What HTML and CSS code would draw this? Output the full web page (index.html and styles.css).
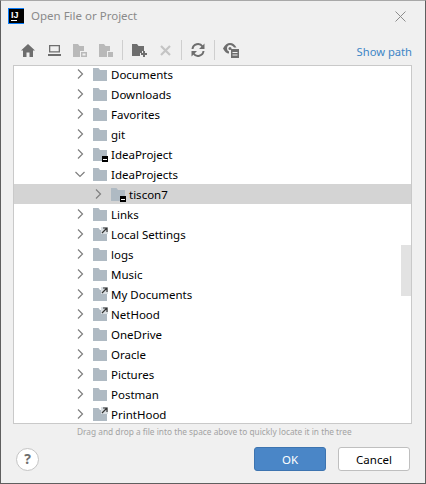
FILE: index.html
```html
<!DOCTYPE html>
<html lang="en">
<head>
<meta charset="UTF-8">
<meta name="viewport" content="width=device-width, initial-scale=1.0">
<title>Open File or Project</title>
<link rel="stylesheet" href="styles.css">
</head>
<body>

<!-- shared icons -->
<svg class="defs" width="0" height="0">
    <symbol id="folder" viewBox="0 0 14 13">
        <path d="M0 0H5.500L7 2H14V13H0Z"/>
    </symbol>
    <symbol id="chev" viewBox="0 0 8 12">
        <path d="M2 1.500L6.500 6L2 10.500" fill="none" stroke="currentColor" stroke-width="1.200"/>
    </symbol>
    <symbol id="link" viewBox="0 0 7 7">
        <path d="M1 6L5.500 1.500M2 1H6V5" stroke="#333" stroke-width="1.200" fill="none"/>
    </symbol>
</svg>

<div class="dialog">
    <div class="titlebar">
        <svg class="app-icon" width="16" height="16" viewBox="0 0 16 16">
            <rect width="16" height="16" fill="#087cfa"/>
            <rect x="1" y="1" width="15" height="14" fill="#000"/>
            <text x="3" y="10" class="app-icon-text">IJ</text>
            <rect x="3" y="12" width="6" height="1" fill="#fff"/>
        </svg>
        <span class="title">Open File or Project</span>
        <svg class="close" width="11" height="11" viewBox="0 0 11 11">
            <path d="M0.500 0.500L10.500 10.500M10.500 0.500L0.500 10.500" stroke="#8c8c8c" stroke-width="1" fill="none"/>
        </svg>
    </div>

    <div class="toolbar">
        <span class="tool">
            <svg width="14" height="13" viewBox="0 0 14 13"><path d="M7 0L14 6.500H12V13H8.500V8.500H5.500V13H2V6.500H0Z" fill="#6e6e6e"/></svg>
        </span>
        <span class="tool">
            <svg width="13" height="11" viewBox="0 0 13 11"><path d="M1 0H12V7.500H1ZM2.300 1.300V6.200H10.700V1.300Z" fill="#6e6e6e" fill-rule="evenodd"/><rect y="9" width="13" height="2" fill="#6e6e6e"/></svg>
        </span>
        <span class="tool">
            <svg width="14" height="13" viewBox="0 0 14 13"><path d="M0 0H5L6.500 2H11V7H7V13H0Z" fill="#b9b9b9"/><path d="M8 8H14V13H8ZM9.500 9.500V11.500H12.500V9.500Z" fill="#b9b9b9" fill-rule="evenodd"/></svg>
        </span>
        <span class="tool">
            <svg width="14" height="13" viewBox="0 0 14 13"><path d="M0 0H5L6.500 2H11V7H8V13H0Z" fill="#b9b9b9"/><rect x="9" y="8" width="5" height="5" fill="#b9b9b9"/></svg>
        </span>
        <span class="sep"></span>
        <span class="tool">
            <svg width="15" height="13" viewBox="0 0 15 13"><path d="M0 0H5L6.500 2H12V7H10V9H8V12H0Z" fill="#6e6e6e"/><path d="M11 8H13V10H15V12H13V14H11V12H9V10H11Z" fill="#6e6e6e" transform="translate(0 -1)"/></svg>
        </span>
        <span class="tool">
            <svg width="11" height="11" viewBox="0 0 11 11"><path d="M1 1L10 10M10 1L1 10" stroke="#c4c4c4" stroke-width="2.200" fill="none"/></svg>
        </span>
        <span class="sep"></span>
        <span class="tool">
            <svg width="14" height="14" viewBox="0 0 14 14"><path d="M1.500 6A5.500 5.500 0 0 1 11.500 3.500M12.500 8A5.500 5.500 0 0 1 2.500 10.500" stroke="#6e6e6e" stroke-width="2" fill="none"/><path d="M13.500 0.500V6H8ZM0.500 13.500V8H6Z" fill="#6e6e6e"/></svg>
        </span>
        <span class="sep"></span>
        <span class="tool">
            <svg width="16" height="15" viewBox="0 0 16 15"><path d="M0 5.500C2 1.500 4.500 0 7 0C10 0 12 2 13.500 4.500H11C10 3 8.500 2 7 2C5 2 4 3.500 4 5.500C4 7 5 8 6 8.500V10.500C3.500 10.500 1.500 8.500 0 5.500Z" fill="#6e6e6e"/><circle cx="7" cy="5.500" r="1.500" fill="#6e6e6e"/><path d="M8 6H16V15H8ZM9.500 9V10H14.500V9ZM9.500 11.500V12.500H14.500V11.500Z" fill="#6e6e6e" fill-rule="evenodd"/></svg>
        </span>
        <a class="show-path">Show path</a>
    </div>

    <div class="tree">
        <div class="rows">
            <div class="row"><svg class="chev"><use href="#chev"/></svg><svg class="folder"><use href="#folder"/></svg>Documents</div>
            <div class="row"><svg class="chev"><use href="#chev"/></svg><svg class="folder"><use href="#folder"/></svg>Downloads</div>
            <div class="row"><svg class="chev"><use href="#chev"/></svg><svg class="folder"><use href="#folder"/></svg>Favorites</div>
            <div class="row"><svg class="chev"><use href="#chev"/></svg><svg class="folder"><use href="#folder"/></svg>git</div>
            <div class="row"><svg class="chev"><use href="#chev"/></svg><span class="icon"><svg class="folder"><use href="#folder"/></svg><i class="badge-drive"></i></span>IdeaProject</div>
            <div class="row"><svg class="chev open"><use href="#chev"/></svg><svg class="folder"><use href="#folder"/></svg>IdeaProjects</div>
            <div class="row sub selected"><svg class="chev"><use href="#chev"/></svg><span class="icon"><svg class="folder"><use href="#folder"/></svg><i class="badge-drive"></i></span>tiscon7</div>
            <div class="row"><svg class="chev"><use href="#chev"/></svg><svg class="folder"><use href="#folder"/></svg>Links</div>
            <div class="row"><svg class="chev"><use href="#chev"/></svg><span class="icon"><svg class="folder"><use href="#folder"/></svg><i class="badge-link"><svg width="7" height="7"><use href="#link"/></svg></i></span>Local Settings</div>
            <div class="row"><svg class="chev"><use href="#chev"/></svg><svg class="folder"><use href="#folder"/></svg>logs</div>
            <div class="row"><svg class="chev"><use href="#chev"/></svg><svg class="folder"><use href="#folder"/></svg>Music</div>
            <div class="row"><svg class="chev"><use href="#chev"/></svg><span class="icon"><svg class="folder"><use href="#folder"/></svg><i class="badge-link"><svg width="7" height="7"><use href="#link"/></svg></i></span>My Documents</div>
            <div class="row"><svg class="chev"><use href="#chev"/></svg><span class="icon"><svg class="folder"><use href="#folder"/></svg><i class="badge-link"><svg width="7" height="7"><use href="#link"/></svg></i></span>NetHood</div>
            <div class="row"><svg class="chev"><use href="#chev"/></svg><svg class="folder"><use href="#folder"/></svg>OneDrive</div>
            <div class="row"><svg class="chev"><use href="#chev"/></svg><svg class="folder"><use href="#folder"/></svg>Oracle</div>
            <div class="row"><svg class="chev"><use href="#chev"/></svg><svg class="folder"><use href="#folder"/></svg>Pictures</div>
            <div class="row"><svg class="chev"><use href="#chev"/></svg><svg class="folder"><use href="#folder"/></svg>Postman</div>
            <div class="row"><svg class="chev"><use href="#chev"/></svg><span class="icon"><svg class="folder"><use href="#folder"/></svg><i class="badge-link"><svg width="7" height="7"><use href="#link"/></svg></i></span>PrintHood</div>
        </div>
        <div class="thumb"></div>
    </div>

    <div class="hint">Drag and drop a file into the space above to quickly locate it in the tree</div>

    <div class="footer">
        <span class="help">?</span>
        <button class="btn primary">OK</button>
        <button class="btn">Cancel</button>
    </div>
</div>

</body>
</html>
```

FILE: styles.css
```css
/* dialog frame */
html, body {
    margin: 0;
    height: 100%;
}
body {
    font-family: "Noto Sans", "Open Sans", Arial, sans-serif;
    font-size: 11.500px;
    color: #000;
    overflow: hidden;
}
.defs {
    position: absolute;
}
.dialog {
    box-sizing: border-box;
    width: 426px;
    height: 484px;
    background-color: #f0f0f0;
    border: 1px solid #5f5f5f;
    border-top-color: #a8a8a8;
    display: flex;
    flex-direction: column;
}

/* title */
.titlebar {
    height: 30px;
    display: flex;
    align-items: center;
    padding: 0 19px 0 7px;
}
.app-icon {
    margin-right: 7px;
}
.app-icon-text {
    font-family: "Liberation Sans", Arial, sans-serif;
    font-size: 9px;
    font-weight: bold;
    fill: #fff;
}
.title {
    flex: 1;
    margin-bottom: 2px;
    color: #8a8a8a;
}

/* toolbar */
.toolbar {
    height: 34px;
    display: flex;
    align-items: center;
    padding: 4px 13px 0 14px;
    box-sizing: border-box;
}
.tool {
    width: 26px;
    display: flex;
    justify-content: center;
}
.sep {
    width: 1px;
    height: 20px;
    margin: 0 3px;
    background-color: #cfcfcf;
}
.show-path {
    margin-left: auto;
    margin-top: 2px;
    color: #3d85c6;
    font-size: 11.200px;
}

/* tree */
.tree {
    position: relative;
    box-sizing: border-box;
    height: 359px;
    margin: 0 13px 0 12px;
    background-color: #fff;
    border: 1px solid #c9c9c9;
    overflow: hidden;
}
.rows {
    margin-top: -2px;
}
.row {
    box-sizing: border-box;
    height: 20px;
    line-height: 18px;
    padding-top: 2px;
    display: flex;
    align-items: center;
    padding-left: 62px;
    white-space: nowrap;
}
.row.sub {
    padding-left: 80px;
}
.row.selected {
    background-color: #d4d4d4;
}
.chev {
    width: 8px;
    height: 12px;
    margin-right: 9px;
    margin-bottom: 2px;
    color: #7f7f7f;
}
.chev.open {
    transform: rotate(90deg);
}
.folder {
    width: 14px;
    height: 13px;
    margin-right: 4px;
    margin-bottom: 1px;
    fill: #afbac3;
}
.icon {
    position: relative;
    display: flex;
}
.badge-drive {
    position: absolute;
    left: 9px;
    top: 8px;
    width: 6px;
    height: 6px;
    background-color: #000;
}
.badge-drive::after {
    content: "";
    position: absolute;
    left: 1px;
    top: 3px;
    width: 4px;
    height: 1px;
    background-color: #fff;
}
.badge-link {
    position: absolute;
    left: 8px;
    top: -1px;
    width: 7px;
    height: 7px;
    display: flex;
    background-color: #d9dee2;
}
.thumb {
    position: absolute;
    right: 0;
    top: 179px;
    width: 10px;
    height: 51px;
    background-color: #e2e2e2;
}

/* bottom */
.hint {
    height: 16px;
    line-height: 15px;
    padding-left: 76px;
    color: #a3a3a3;
    font-size: 8.300px;
    white-space: nowrap;
}
.footer {
    display: flex;
    align-items: center;
    padding: 7px 15px 0 15px;
    gap: 12px;
}
.help {
    box-sizing: border-box;
    width: 23px;
    height: 23px;
    margin-right: auto;
    border: 1px solid #c4c4c4;
    border-radius: 50%;
    background-color: #fff;
    color: #6e6e6e;
    font-size: 14px;
    font-weight: bold;
    line-height: 20px;
    text-align: center;
}
.btn {
    box-sizing: border-box;
    width: 72px;
    height: 24px;
    padding: 0;
    font-family: inherit;
    font-size: 11.500px;
    color: #000;
    background-color: #fff;
    border: 1px solid #bfbfbf;
    border-radius: 3px;
}
.btn.primary {
    color: #fff;
    background-color: #4a86c7;
    border-color: #3d74b0;
}
```
